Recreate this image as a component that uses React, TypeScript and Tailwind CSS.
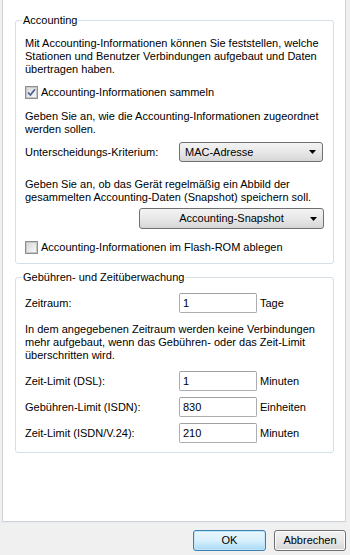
import React from 'react';

function Checkbox({ checked }: { checked?: boolean }) {
  return (
    <span className="flex h-[13px] w-[13px] shrink-0 items-center justify-center border border-[#8f8f8f] bg-white">
      <span className="flex h-[11px] w-[11px] items-center justify-center border border-[#c6c6c6] bg-gradient-to-br from-[#d9d9d9] to-[#f7f7f7]">
        {checked && (
          <svg width="9" height="9" viewBox="0 0 9 9">
            <path d="M1 4.5 L3.4 7 L8 1.2" fill="none" stroke="#4a5f97" strokeWidth="1.7" />
          </svg>
        )}
      </span>
    </span>
  );
}

function Arrow() {
  return (
    <svg width="7" height="4" viewBox="0 0 7 4" className="shrink-0">
      <path d="M0 0 H7 L3.5 4 Z" fill="#000" />
    </svg>
  );
}

function TextBox({ value }: { value: string }) {
  return (
    <div className="flex h-[20px] w-[78px] items-center rounded-[2px] border border-[#abadb3] border-t-[#a0a0a0] bg-white pl-[3px]">
      {value}
    </div>
  );
}

function LimitRow({ label, value, unit, className }: { label: string; value: string; unit: string; className?: string }) {
  return (
    <div className={'flex h-[20px] items-center ' + (className ?? '')}>
      <span className="w-[154px]">{label}</span>
      <TextBox value={value} />
      <span className="ml-[3px]">{unit}</span>
    </div>
  );
}

export default function App() {
  return (
    <div className="flex h-[555px] w-[350px] flex-col bg-[#f0f0f0] text-[11px] leading-[13px] text-black [font-family:'Liberation_Sans',Arial,sans-serif]">
      {/* Scroll panel */}
      <div className="ml-[2px] h-[522px] w-[344px] shrink-0 border-x border-b border-[#d3d3d3] bg-white pl-[12px]">
        {/* Accounting */}
        <fieldset className="mt-[13px] w-[319px] rounded-[3px] border border-[#d5dfe5] pb-[9px] pl-[9px] pr-[8px]">
          <legend className="ml-[-3px] px-[1px] leading-[14px]">Accounting</legend>
          <p className="mt-[10px]">
            Mit Accounting-Informationen können Sie feststellen, welche Stationen und Benutzer Verbindungen aufgebaut und Daten übertragen haben.
          </p>
          <label className="mt-[9px] flex h-[14px] items-center gap-[3px]">
            <Checkbox checked />
            <span>Accounting-Informationen sammeln</span>
          </label>
          <p className="mt-[11px]">Geben Sie an, wie die Accounting-Informationen zugeordnet werden sollen.</p>
          <div className="mt-[6px] flex h-[20px] items-center">
            <span className="w-[154px]">Unterscheidungs-Kriterium:</span>
            <div className="flex h-[20px] w-[144px] items-center justify-between rounded-[3px] border border-[#707070] bg-gradient-to-b from-[#f3f3f3] via-[#e8e8e8] to-[#d6d6d6] pl-[5px] pr-[6px]">
              <span>MAC-Adresse</span>
              <Arrow />
            </div>
          </div>
          <p className="mt-[16px]">
            Geben Sie an, ob das Gerät regelmäßig ein Abbild der gesammelten Accounting-Daten (Snapshot) speichern soll.
          </p>
          <div className="mt-[4px] flex justify-end pr-[1px]">
            <div className="relative flex h-[21px] w-[185px] items-center justify-center rounded-[3px] border border-[#707070] bg-gradient-to-b from-[#f3f3f3] via-[#e8e8e8] to-[#d6d6d6]">
              <span>Accounting-Snapshot</span>
              <span className="absolute right-[6px] top-[8px] flex">
                <Arrow />
              </span>
            </div>
          </div>
          <label className="mt-[11px] flex h-[14px] items-center gap-[3px]">
            <Checkbox />
            <span>Accounting-Informationen im Flash-ROM ablegen</span>
          </label>
        </fieldset>

        {/* Gebühren */}
        <fieldset className="mt-[6px] w-[319px] rounded-[3px] border border-[#d5dfe5] pb-[9px] pl-[9px] pr-[8px]">
          <legend className="ml-[-3px] px-[1px] leading-[14px]">Gebühren- und Zeitüberwachung</legend>
          <LimitRow label="Zeitraum:" value="1" unit="Tage" className="mt-[9px]" />
          <p className="mt-[10px]">
            In dem angegebenen Zeitraum werden keine Verbindungen mehr aufgebaut, wenn das Gebühren- oder das Zeit-Limit überschritten wird.
          </p>
          <LimitRow label="Zeit-Limit (DSL):" value="1" unit="Minuten" className="mt-[9px]" />
          <LimitRow label="Gebühren-Limit (ISDN):" value="830" unit="Einheiten" className="mt-[6px]" />
          <LimitRow label="Zeit-Limit (ISDN/V.24):" value="210" unit="Minuten" className="mt-[6px]" />
        </fieldset>
      </div>
      <div className="h-px w-[346px] bg-[#e3ebf4]" />

      {/* Buttons */}
      <div className="mt-[7px] flex justify-end gap-[8px] pr-[4px]">
        <button className="flex h-[21px] w-[73px] items-center justify-center rounded-[3px] border border-[#3c7fb1] bg-gradient-to-b from-[#eaf6fd] via-[#d9f0fc] to-[#a7d9f5] shadow-[inset_0_0_0_1px_#bfe6fb]">
          OK
        </button>
        <button className="flex h-[21px] w-[72px] items-center justify-center rounded-[3px] border border-[#707070] bg-gradient-to-b from-[#f3f3f3] via-[#e8e8e8] to-[#d6d6d6] shadow-[inset_0_0_0_1px_#fcfcfc]">
          Abbrechen
        </button>
      </div>
    </div>
  );
}
